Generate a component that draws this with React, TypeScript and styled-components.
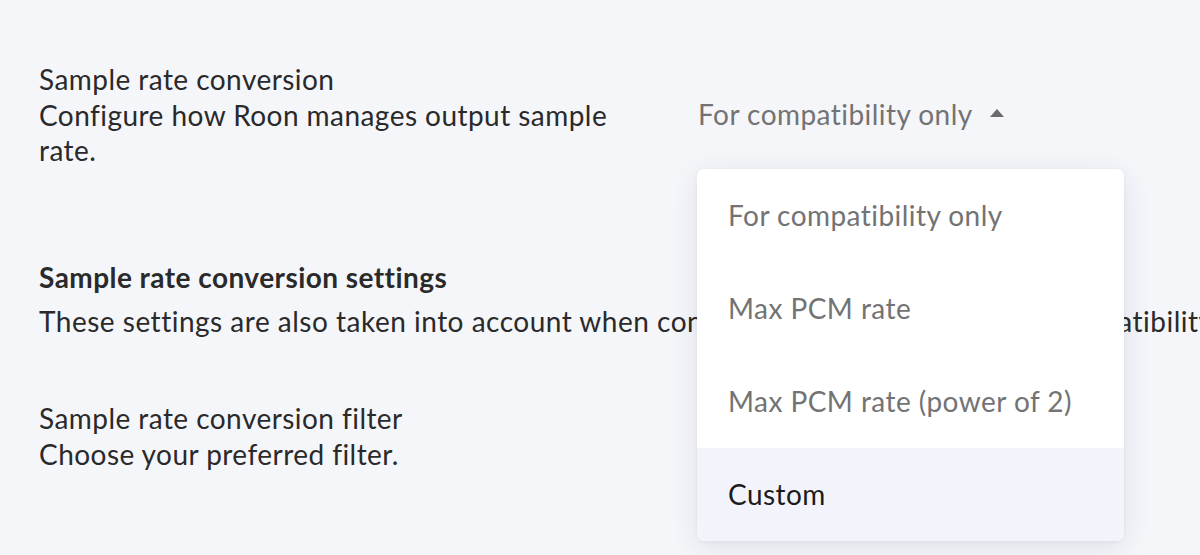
import React from 'react';
import styled, { createGlobalStyle } from 'styled-components';

const GlobalStyle = createGlobalStyle`
  html, body {
    margin: 0;
    padding: 0;
    background: #f5f6fa;
    overflow: hidden;
  }
  body {
    font-family: Lato, 'Noto Sans', sans-serif;
    color: #2a2a2a;
  }
`;

const options = ['For compatibility only', 'Max PCM rate', 'Max PCM rate (power of 2)', 'Custom'];

const App: React.FC = () => {
  const selected = 'Custom';

  return (
    <Page>
      <GlobalStyle />
      <SettingRow>
        <SettingText>
          <Title>Sample rate conversion</Title>
          <Description>Configure how Roon manages output sample rate.</Description>
        </SettingText>
        <SelectWrap>
          <SelectValue>
            For compatibility only
            <Caret viewBox="0 0 14 8">
              <path d="M7 0 L14 8 L0 8 Z" />
            </Caret>
          </SelectValue>
          <Menu>
            {options.map((opt) => (
              <MenuItem key={opt} active={opt === selected}>
                {opt}
              </MenuItem>
            ))}
          </Menu>
        </SelectWrap>
      </SettingRow>

      <Section>
        <SectionHeading>Sample rate conversion settings</SectionHeading>
        <SectionNote>
          These settings are also taken into account when converting the sample rate for compatibility
        </SectionNote>
      </Section>

      <SettingRow>
        <SettingText>
          <Title>Sample rate conversion filter</Title>
          <Description>Choose your preferred filter.</Description>
        </SettingText>
      </SettingRow>
    </Page>
  );
};

export default App;

const Page = styled.div`
  width: 1200px;
  height: 555px;
  overflow: hidden;
  box-sizing: border-box;
  padding: 62px 0 0 39px;
  font-size: 28px;
  line-height: 35px;
  letter-spacing: 0.45px;
`;

const SettingRow = styled.div`
  display: flex;
  align-items: center;
  gap: 59px;
`;

const SettingText = styled.div`
  width: 600px;
  flex-shrink: 0;
`;

const Title = styled.div``;

const Description = styled.div`
  margin-top: 1px;
`;

const SelectWrap = styled.div`
  position: relative;
  z-index: 2;
`;

const SelectValue = styled.div`
  display: flex;
  align-items: center;
  gap: 17px;
  margin-top: -2px;
  color: #737373;
  white-space: nowrap;
`;

const Caret = styled.svg`
  width: 14px;
  height: 8px;
  fill: #6a6a6a;
  margin-bottom: 2px;
`;

const Menu = styled.div`
  position: absolute;
  top: 70px;
  left: -1px;
  width: 427px;
  background: #ffffff;
  border-radius: 7px;
  overflow: hidden;
  box-shadow: 0 6px 28px rgba(40, 44, 70, 0.1), 0 1px 4px rgba(40, 44, 70, 0.05);
`;

const MenuItem = styled.div<{ active?: boolean }>`
  height: 93px;
  display: flex;
  align-items: center;
  padding-left: 31px;
  color: ${({ active }) => (active ? '#1c1c1c' : '#737373')};
  background: ${({ active }) => (active ? '#f3f4fb' : 'transparent')};
  white-space: nowrap;
`;

const Section = styled.div`
  margin-top: 92px;
  margin-bottom: 62px;
`;

const SectionHeading = styled.div`
  font-weight: 700;
  margin-bottom: 9px;
`;

const SectionNote = styled.div`
  white-space: nowrap;
  letter-spacing: 0.5px;
`;
